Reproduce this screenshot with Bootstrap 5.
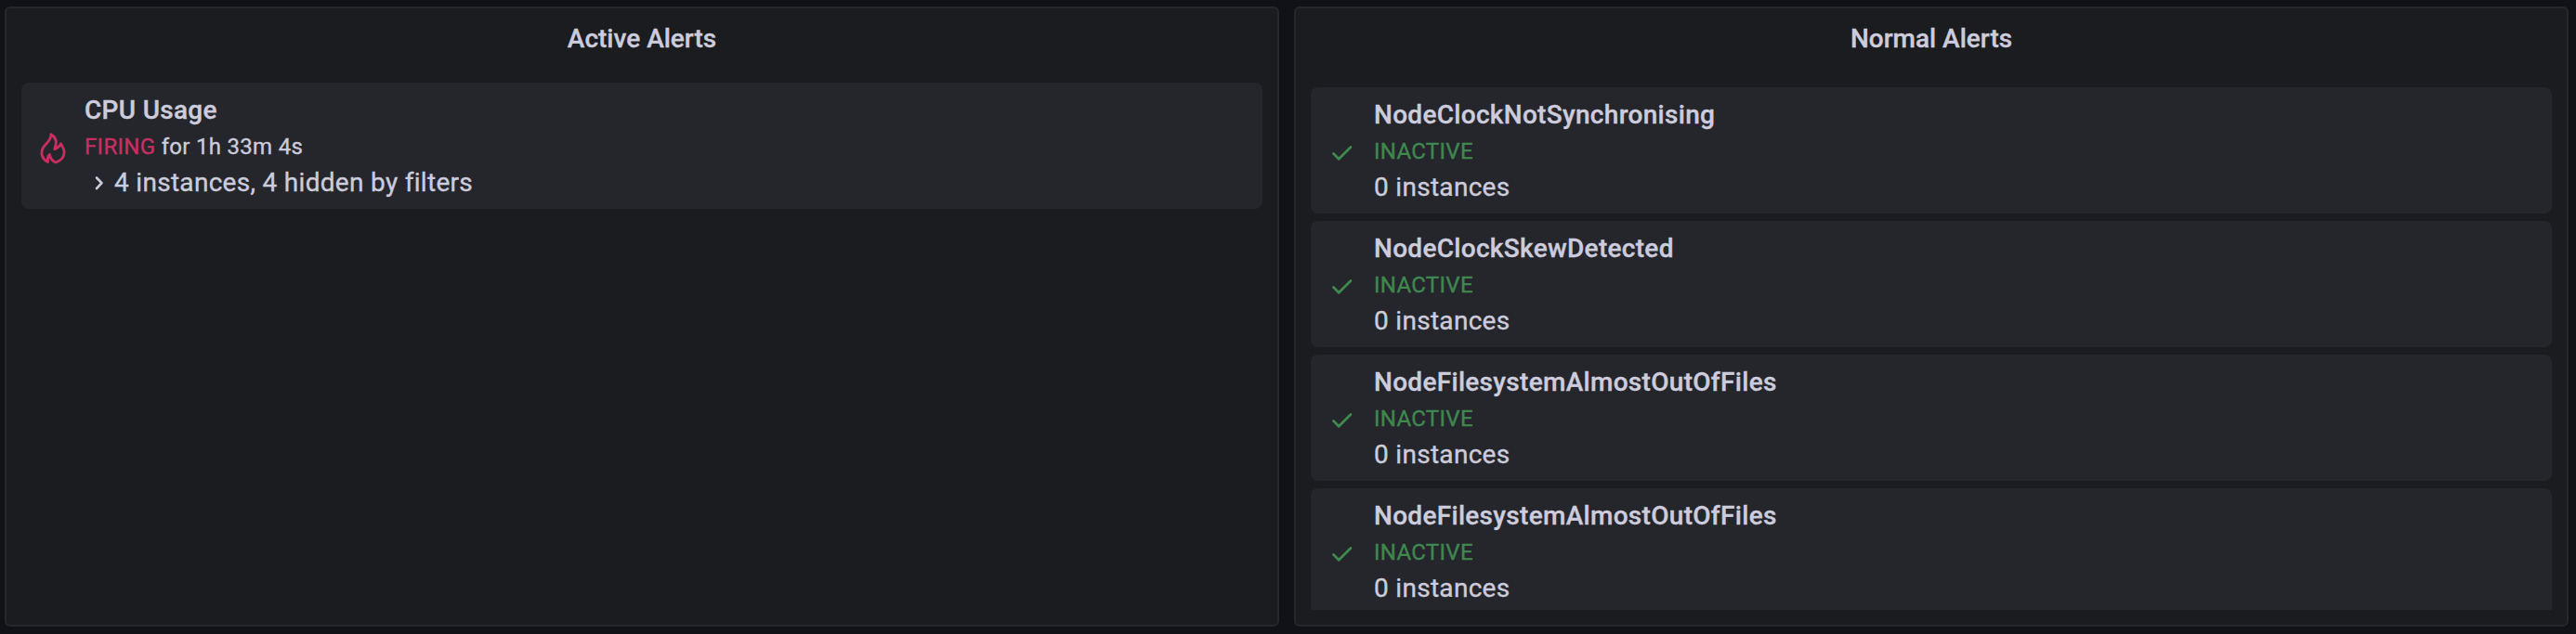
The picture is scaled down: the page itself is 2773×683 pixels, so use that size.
<!DOCTYPE html>
<html lang="en">
<head>
<meta charset="utf-8">
<title>Alerts</title>
<link rel="stylesheet" href="https://cdn.jsdelivr.net/npm/bootstrap@5.3.0/dist/css/bootstrap.min.css">
<style>
  body { background: #111217; color: #ccccdc; font-family: Roboto, "Liberation Sans", sans-serif; font-size: 28px; letter-spacing: .3px; -webkit-text-stroke: .35px currentColor; }
  .dash { height: 683px; padding: 7px 8px 8px 5px; gap: 16px; }
  .panel { background: #1b1c20; border: 2px solid #26272c; border-radius: 6px; padding: 0 16px 16px; }
  .panel-title { height: 64px; line-height: 66px; font-size: 28px; font-weight: 500; letter-spacing: 0; }
  .alerts { padding-top: 16px; min-height: 0; }
  .alerts.scrolled { padding-top: 21px; }
  .alert-item { background: #25262c; border-radius: 8px; height: 136px; margin-bottom: 8px; padding: 8px 20px 0 20px; }
  .icon-col { width: 48px; }
  .icon-col svg { display: block; }
  .icon-fire { margin: 44px 0 0 -2px; }
  .icon-check { margin-top: 52px; }
  .alert-name { font-weight: 500; line-height: 44px; }
  .alert-state { font-size: 24px; line-height: 35px; }
  .alert-count { line-height: 42px; }
  .firing { color: #c72f61; }
  .inactive { color: #3f8850; }
</style>
</head>
<body class="overflow-hidden">
<main class="dash d-flex">
  <section class="panel d-flex flex-column flex-fill w-50">
    <h2 class="panel-title text-center m-0 flex-shrink-0">Active Alerts</h2>
    <div class="alerts flex-fill overflow-hidden">
      <article class="alert-item d-flex">
        <div class="icon-col flex-shrink-0 firing">
          <svg class="icon-fire" width="34" height="38" viewBox="41 141 34 38" fill="none" stroke="currentColor" stroke-width="2.8" stroke-linejoin="round" stroke-linecap="round"><path d="M54.800 144.800C55.500 151 49.500 154 46.500 159C43 165.500 45.500 171.500 51.400 174.600C50.800 171 51.600 168.500 53.300 166.400C54.200 170.200 56 173.600 60 175C66.500 172.800 69.300 168 69.100 163C68.800 159.500 66.600 157.500 65.600 154.800C64 157.800 61.800 159.600 58.800 160.600C61.500 154 60.500 148 54.800 144.800Z"/></svg>
        </div>
        <div>
          <div class="alert-name">CPU Usage</div>
          <div class="alert-state"><span class="firing">FIRING</span> for 1h 33m 4s</div>
          <div class="alert-count d-flex align-items-center"><svg class="me-2 ms-2" width="16" height="18" viewBox="0 0 16 18" fill="none" stroke="currentColor" stroke-width="2.600" stroke-linecap="round" stroke-linejoin="round"><path d="M5 3.500l5.500 5.700L5 15"/></svg>4 instances, 4 hidden by filters</div>
        </div>
      </article>
    </div>
  </section>
  <section class="panel d-flex flex-column flex-fill w-50">
    <h2 class="panel-title text-center m-0 flex-shrink-0">Normal Alerts</h2>
    <div class="alerts scrolled flex-fill overflow-hidden" id="normal"></div>
  </section>
</main>
<template id="row">
  <article class="alert-item d-flex">
    <div class="icon-col flex-shrink-0 inactive">
      <svg class="icon-check" width="28" height="22" viewBox="0 0 28 22" fill="none" stroke="currentColor" stroke-width="2.800" stroke-linecap="round" stroke-linejoin="round"><path d="M4.500 11.500L10.200 17.300L23 4.400"/></svg>
    </div>
    <div>
      <div class="alert-name"></div>
      <div class="alert-state inactive">INACTIVE</div>
      <div class="alert-count">0 instances</div>
    </div>
  </article>
</template>
<script>
  const names = ["NodeClockNotSynchronising", "NodeClockSkewDetected", "NodeFilesystemAlmostOutOfFiles", "NodeFilesystemAlmostOutOfFiles"];
  for (const n of names) {
    const r = document.getElementById("row").content.cloneNode(true);
    r.querySelector(".alert-name").textContent = n;
    document.getElementById("normal").append(r);
  }
</script>
<script src="https://cdn.jsdelivr.net/npm/bootstrap@5.3.0/dist/js/bootstrap.bundle.min.js"></script>
</body>
</html>
